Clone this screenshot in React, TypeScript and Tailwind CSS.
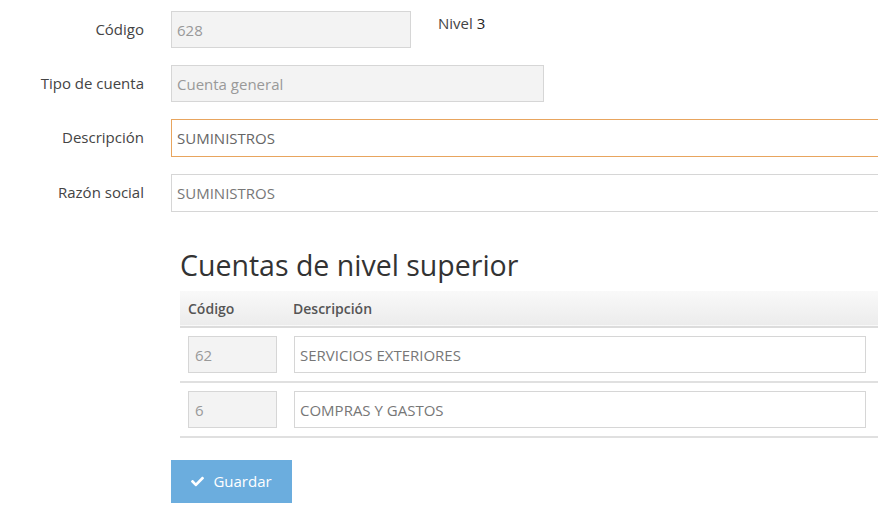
import { FaCheck } from 'react-icons/fa';

const font = { fontFamily: '"Open Sans", "Liberation Sans", sans-serif' };

const parents = [
  { code: '62', desc: 'SERVICIOS EXTERIORES' },
  { code: '6', desc: 'COMPRAS Y GASTOS' },
];

const Field = ({ label, children }) => (
  <div className="flex items-start mb-[17px]">
    <label className="w-[144px] shrink-0 text-right text-[15px] text-[#444] leading-[37px]">
      {label}
    </label>
    <div className="ml-[27px] flex items-start">{children}</div>
  </div>
);

const App = () => {
  return (
    <div className="w-[878px] h-[509px] overflow-hidden bg-white" style={font}>
      <div className="w-[960px] pt-[11px]">
        {/* ================= FORM ================= */}
        <Field label="Código">
          <input
            disabled
            value="628"
            className="w-[240px] h-[37px] px-[5px] text-[15px] text-[#999] bg-[#f3f3f3] border border-[#d6d6d6] outline-none"
          />
          <span className="ml-[27px] mt-[1px] text-[15px] leading-[22px] text-[#444]">
            Nivel <span className="text-[#222]">3</span>
          </span>
        </Field>

        <Field label="Tipo de cuenta">
          <input
            disabled
            value="Cuenta general"
            className="w-[373px] h-[37px] px-[5px] text-[15px] text-[#999] bg-[#f3f3f3] border border-[#d6d6d6] outline-none"
          />
        </Field>

        <Field label="Descripción">
          <input
            defaultValue="SUMINISTROS"
            className="w-[760px] h-[38px] px-[5px] text-[15px] text-[#666] bg-white border border-[#e8a55e] outline-none"
          />
        </Field>

        <Field label="Razón social">
          <input
            defaultValue="SUMINISTROS"
            className="w-[760px] h-[38px] px-[5px] text-[15px] text-[#777] bg-white border border-[#d6d6d6] outline-none"
          />
        </Field>

        {/* ================= PARENT ACCOUNTS ================= */}
        <div className="ml-[180px] mt-[33px] w-[700px]">
          <h2 className="text-[28.5px] leading-[40px] text-[#333] mb-[6px]">Cuentas de nivel superior</h2>

          <table className="w-full border-collapse">
            <thead>
              <tr className="bg-gradient-to-b from-[#f9f9f9] to-[#ececec] border-b-2 border-[#dcdcdc]">
                <th className="w-[105px] h-[36px] px-[8px] text-left text-[14px] font-semibold text-[#555]">
                  Código
                </th>
                <th className="h-[36px] px-[8px] text-left text-[14px] font-semibold text-[#555]">
                  Descripción
                </th>
              </tr>
            </thead>
            <tbody>
              {parents.map((p) => (
                <tr key={p.code} className="border-b-2 border-[#e0e0e0]">
                  <td className="py-[8px] pl-[8px] pr-[8px]">
                    <input
                      disabled
                      value={p.code}
                      className="w-[89px] h-[37px] px-[6px] text-[15px] text-[#999] bg-[#f3f3f3] border border-[#d6d6d6] outline-none"
                    />
                  </td>
                  <td className="py-[8px] pl-[9px] pr-[14px]">
                    <input
                      readOnly
                      value={p.desc}
                      className="w-[572px] h-[37px] px-[5px] text-[15px] text-[#777] bg-white border border-[#d6d6d6] outline-none"
                    />
                  </td>
                </tr>
              ))}
            </tbody>
          </table>
        </div>

        {/* ================= ACTIONS ================= */}
        <div className="ml-[171px] mt-[22px]">
          <button className="w-[121px] h-[43px] flex items-center justify-center gap-[9px] bg-[#6badde] text-white text-[15px]">
            <FaCheck className="text-[13px]" />
            Guardar
          </button>
        </div>
      </div>
    </div>
  );
};

export default App;
